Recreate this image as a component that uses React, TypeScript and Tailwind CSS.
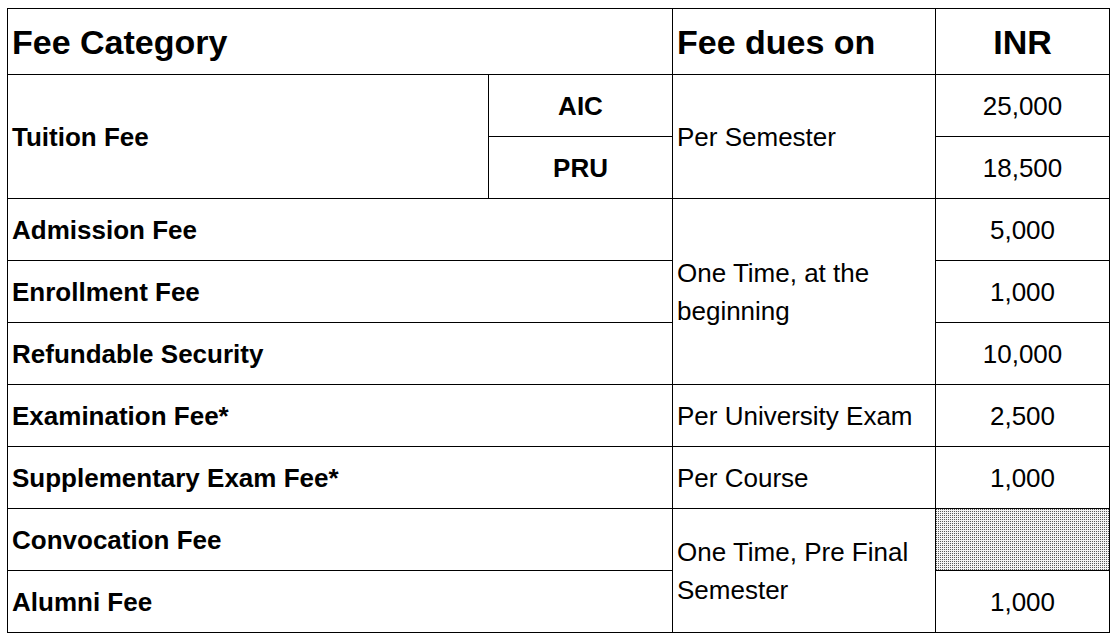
import React from "react";

type Row = {
  label: string;
  amount: string;
};

const firstGroup: Row[] = [
  { label: "Admission Fee", amount: "5,000" },
  { label: "Enrollment Fee", amount: "1,000" },
  { label: "Refundable Security", amount: "10,000" },
];

const cell = "border border-black p-0 align-middle";
const label = "pl-[4px] text-left font-bold";
const amount = "text-center";

function Dotted() {
  return (
    <svg className="block h-[61px] w-full" shapeRendering="crispEdges">
      <defs>
        <pattern id="dots" width="2" height="2" patternUnits="userSpaceOnUse">
          <rect width="2" height="2" fill="#f4f4f4" />
          <rect width="1" height="1" fill="#5a5a5a" />
        </pattern>
      </defs>
      <rect width="100%" height="100%" fill="url(#dots)" />
    </svg>
  );
}

export default function App() {
  return (
    <div
      className="min-h-screen bg-white pl-[7px] pt-[8px] text-black"
      style={{ fontFamily: '"Liberation Sans", Arial, sans-serif' }}
    >
      <table className="table-fixed border-collapse text-[26px] leading-none">
        <colgroup>
          <col className="w-[481px]" />
          <col className="w-[184px]" />
          <col className="w-[263px]" />
          <col className="w-[174px]" />
        </colgroup>
        <tbody>
          {/* Header */}
          <tr className="h-[66px]">
            <td colSpan={2} className={`${cell} ${label} text-[34px]`}>
              Fee Category
            </td>
            <td className={`${cell} ${label} text-[34px]`}>Fee dues on</td>
            <td className={`${cell} text-center text-[34px] font-bold`}>INR</td>
          </tr>

          {/* Tuition */}
          <tr className="h-[62px]">
            <td rowSpan={2} className={`${cell} ${label}`}>
              Tuition Fee
            </td>
            <td className={`${cell} text-center font-bold`}>AIC</td>
            <td rowSpan={2} className={`${cell} pl-[4px]`}>
              Per Semester
            </td>
            <td className={`${cell} ${amount}`}>25,000</td>
          </tr>
          <tr className="h-[62px]">
            <td className={`${cell} text-center font-bold`}>PRU</td>
            <td className={`${cell} ${amount}`}>18,500</td>
          </tr>

          {/* One time fees */}
          {firstGroup.map((row, i) => (
            <tr key={row.label} className="h-[62px]">
              <td colSpan={2} className={`${cell} ${label}`}>
                {row.label}
              </td>
              {i === 0 && (
                <td rowSpan={3} className={`${cell} pl-[4px] leading-[38px]`}>
                  One Time, at the
                  <br />
                  beginning
                </td>
              )}
              <td className={`${cell} ${amount}`}>{row.amount}</td>
            </tr>
          ))}

          <tr className="h-[62px]">
            <td colSpan={2} className={`${cell} ${label}`}>
              Examination Fee*
            </td>
            <td className={`${cell} pl-[4px]`}>Per University Exam</td>
            <td className={`${cell} ${amount}`}>2,500</td>
          </tr>
          <tr className="h-[62px]">
            <td colSpan={2} className={`${cell} ${label}`}>
              Supplementary Exam Fee*
            </td>
            <td className={`${cell} pl-[4px]`}>Per Course</td>
            <td className={`${cell} ${amount}`}>1,000</td>
          </tr>

          {/* Final semester */}
          <tr className="h-[62px]">
            <td colSpan={2} className={`${cell} ${label}`}>
              Convocation Fee
            </td>
            <td rowSpan={2} className={`${cell} pl-[4px] leading-[38px]`}>
              One Time, Pre Final
              <br />
              Semester
            </td>
            <td className={`${cell}`}>
              <Dotted />
            </td>
          </tr>
          <tr className="h-[62px]">
            <td colSpan={2} className={`${cell} ${label}`}>
              Alumni Fee
            </td>
            <td className={`${cell} ${amount}`}>1,000</td>
          </tr>
        </tbody>
      </table>
    </div>
  );
}
